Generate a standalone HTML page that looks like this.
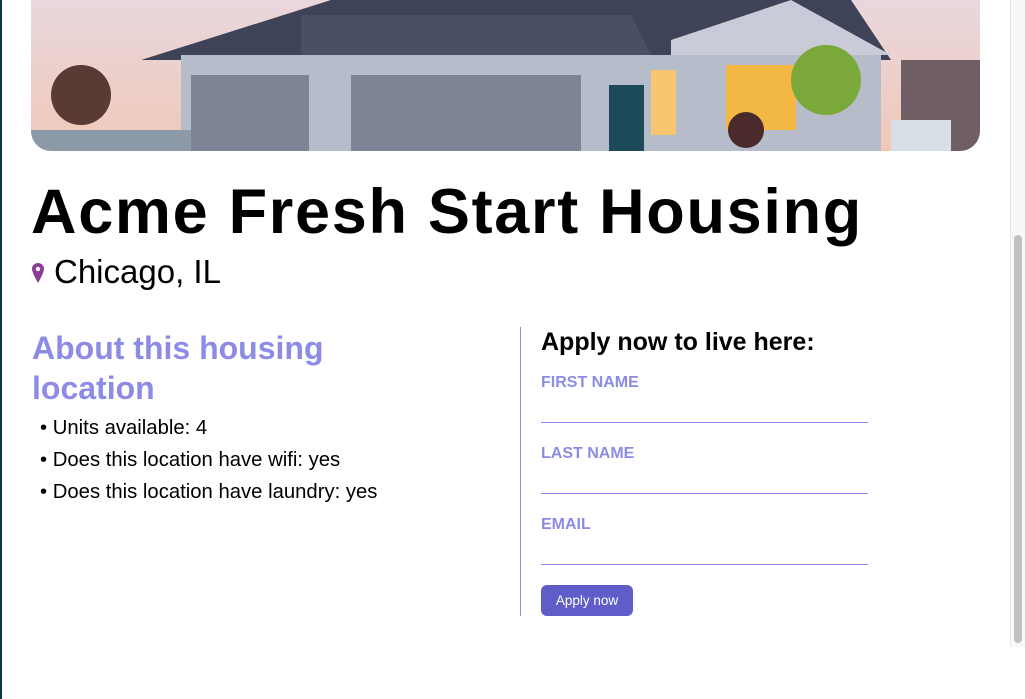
<!DOCTYPE html>
<html><head><style>
html,body{margin:0;padding:0;width:1025px;height:699px;overflow:hidden;background:#fff;font-family:"Liberation Sans",sans-serif;}
.edge{position:absolute;left:0;top:0;width:2px;height:699px;background:#0e3b43;}
.photo{position:absolute;left:31px;top:0;width:949px;height:151px;border-radius:0 0 20px 20px;overflow:hidden;}
.sb{position:absolute;left:1010px;top:0;width:15px;height:647px;background:#f8f8f8;border-left:1px solid #e6e6e6;}
.thumb{position:absolute;left:1014px;top:235px;width:8px;height:408px;background:#c1c1c1;border-radius:4px;}
h1{position:absolute;left:31px;top:174px;margin:0;font-size:63px;font-weight:bold;color:#000;letter-spacing:1.7px;line-height:76px;}
.loc{position:absolute;left:31px;top:251px;font-size:33px;color:#000;line-height:42px;}
.loc svg{vertical-align:0px;margin-right:10px;margin-left:1px;}
h2{position:absolute;left:32px;top:328px;margin:0;width:330px;font-size:32px;line-height:40px;color:#8c8ce6;font-weight:bold;}
ul{position:absolute;left:32px;top:412px;margin:0;padding:0;list-style:none;font-size:20.3px;line-height:32px;color:#000;}
ul li:before{content:"• ";margin-left:8px;}
.vl{position:absolute;left:520px;top:327px;width:1px;height:289px;background:#8c8ce6;}
h3{position:absolute;left:541px;top:326px;margin:0;font-size:25px;font-weight:bold;line-height:32px;}
.lab{position:absolute;left:541px;font-size:16px;font-weight:bold;color:#8c8ce6;}
.line{position:absolute;left:541px;width:327px;height:1px;background:#8c8ce6;}
.btn{position:absolute;left:541px;top:585px;width:92px;height:31px;background:#605dc8;border-radius:6px;color:#fff;font-size:13.5px;text-align:center;line-height:31px;}
</style></head><body>
<div class="edge"></div>
<div class="photo">
<svg width="949" height="151" viewBox="0 0 949 151">
<defs><linearGradient id="sky" x1="0" y1="0" x2="0" y2="1"><stop offset="0" stop-color="#e9d7dd"/><stop offset="1" stop-color="#f0c8b8"/></linearGradient></defs>
<rect width="949" height="151" fill="url(#sky)"/>
<polygon points="110,60 300,0 820,0 860,60" fill="#3f4358"/>
<rect x="150" y="55" width="700" height="96" fill="#b7bccb"/>
<polygon points="270,15 600,15 620,55 270,55" fill="#4b4f63"/>
<rect x="160" y="75" width="118" height="76" fill="#7d8495"/>
<rect x="320" y="75" width="230" height="76" fill="#7d8495"/>
<rect x="578" y="85" width="35" height="66" fill="#1d4a5a"/>
<rect x="620" y="70" width="25" height="65" fill="#f7c66e"/>
<rect x="695" y="65" width="70" height="65" fill="#f3b844"/>
<polygon points="640,40 760,0 860,55 640,55" fill="#c9ccd8"/>
<circle cx="50" cy="95" r="30" fill="#5a3a35"/>
<circle cx="795" cy="80" r="35" fill="#7aa83a"/>
<circle cx="715" cy="130" r="18" fill="#4a2a2a"/>
<rect x="870" y="60" width="79" height="91" fill="#6f5f64"/>
<rect x="0" y="130" width="160" height="21" fill="#8c9aa8"/>
<rect x="860" y="120" width="60" height="31" fill="#d9dfe6"/>
</svg>
</div>
<div class="sb"></div><div class="thumb"></div>
<h1>Acme Fresh Start Housing</h1>
<div class="loc"><svg width="12" height="20" viewBox="0 0 12 20"><path d="M6 0C2.7 0 0 2.6 0 5.8 0 10 6 20 6 20s6-10 6-14.2C12 2.6 9.3 0 6 0z" fill="#8a3e96"/><circle cx="6" cy="6" r="2.2" fill="#fff"/></svg>Chicago, IL</div>
<h2>About this housing location</h2>
<ul><li>Units available: 4</li><li>Does this location have wifi: yes</li><li>Does this location have laundry: yes</li></ul>
<div class="vl"></div>
<h3>Apply now to live here:</h3>
<div class="lab" style="top:374px">FIRST NAME</div><div class="line" style="top:422px"></div>
<div class="lab" style="top:445px">LAST NAME</div><div class="line" style="top:493px"></div>
<div class="lab" style="top:516px">EMAIL</div><div class="line" style="top:564px"></div>
<div class="btn">Apply now</div>
</body></html>
